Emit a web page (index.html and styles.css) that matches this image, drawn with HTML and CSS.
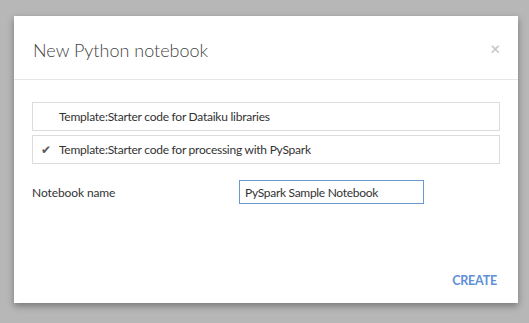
FILE: index.html
```html
<!DOCTYPE html>
<html lang="en">
<head>
  <meta charset="UTF-8">
  <title>New Python notebook</title>
  <link rel="stylesheet" href="styles.css">
</head>
<body>
  <div class="modal">
    <div class="modal-header">
      <h3>New Python notebook</h3>
      <span class="close">&times;</span>
    </div>
    <div class="modal-body">
      <ul class="templates">
        <li><span class="check"></span>Template:Starter code for Dataiku libraries</li>
        <li class="selected"><span class="check">&#10004;</span>Template:Starter code for processing with PySpark</li>
      </ul>
      <div class="field">
        <label>Notebook name</label>
        <input type="text" value="PySpark Sample Notebook">
      </div>
    </div>
    <div class="modal-footer">
      <button type="button">CREATE</button>
    </div>
  </div>
</body>
</html>
```

FILE: styles.css
```css
body {
  margin: 0;
  padding: 16px 11px 0 14px;
  background: #b7b7b7;
  font-family: Lato, "Open Sans", sans-serif;
  color: #333;
  height: 323px;
  box-sizing: border-box;
}
.modal {
  background: #fff;
  height: 287px;
  box-shadow: 0 3px 7px rgba(0, 0, 0, 0.35);
  display: flex;
  flex-direction: column;
}
.modal-header {
  display: flex;
  align-items: center;
  justify-content: space-between;
  height: 63px;
  padding: 0 18px 0 19px;
  border-bottom: 1px solid #e5e5e5;
}
.modal-header h3 {
  margin: 4px 0 0;
  font-size: 18px;
  font-weight: 300;
  color: #444;
}
.close {
  color: #c9c9c9;
  font-size: 17px;
  font-weight: bold;
  margin-top: 2px;
}
.modal-body {
  padding: 22px 18px 0;
  flex: 1;
}
.templates {
  list-style: none;
  margin: 0;
  padding: 0;
}
.templates li {
  display: flex;
  align-items: center;
  height: 27px;
  border: 1px solid #dcdcdc;
  margin-bottom: 4px;
  font-size: 12px;
  letter-spacing: -0.25px;
}
.check {
  width: 26px;
  text-align: center;
  color: #5a5a5a;
  font-size: 12px;
}
.field {
  display: flex;
  align-items: center;
  margin-top: 16px;
}
.field label {
  width: 207px;
  font-size: 12px;
  letter-spacing: -0.1px;
}
input {
  width: 185px;
  height: 24px;
  box-sizing: border-box;
  border: 1px solid #6b98d0;
  padding: 0 5px;
  font-family: Lato, "Open Sans", sans-serif;
  font-size: 12px;
  letter-spacing: -0.3px;
  color: #333;
}
.modal-footer {
  display: flex;
  justify-content: flex-end;
  padding: 0 21px 15px;
}
button {
  background: none;
  border: none;
  padding: 0;
  color: #5d90d7;
  font-family: Lato, "Open Sans", sans-serif;
  font-size: 12.5px;
  font-weight: 700;
  letter-spacing: -0.2px;
  cursor: pointer;
}
```
